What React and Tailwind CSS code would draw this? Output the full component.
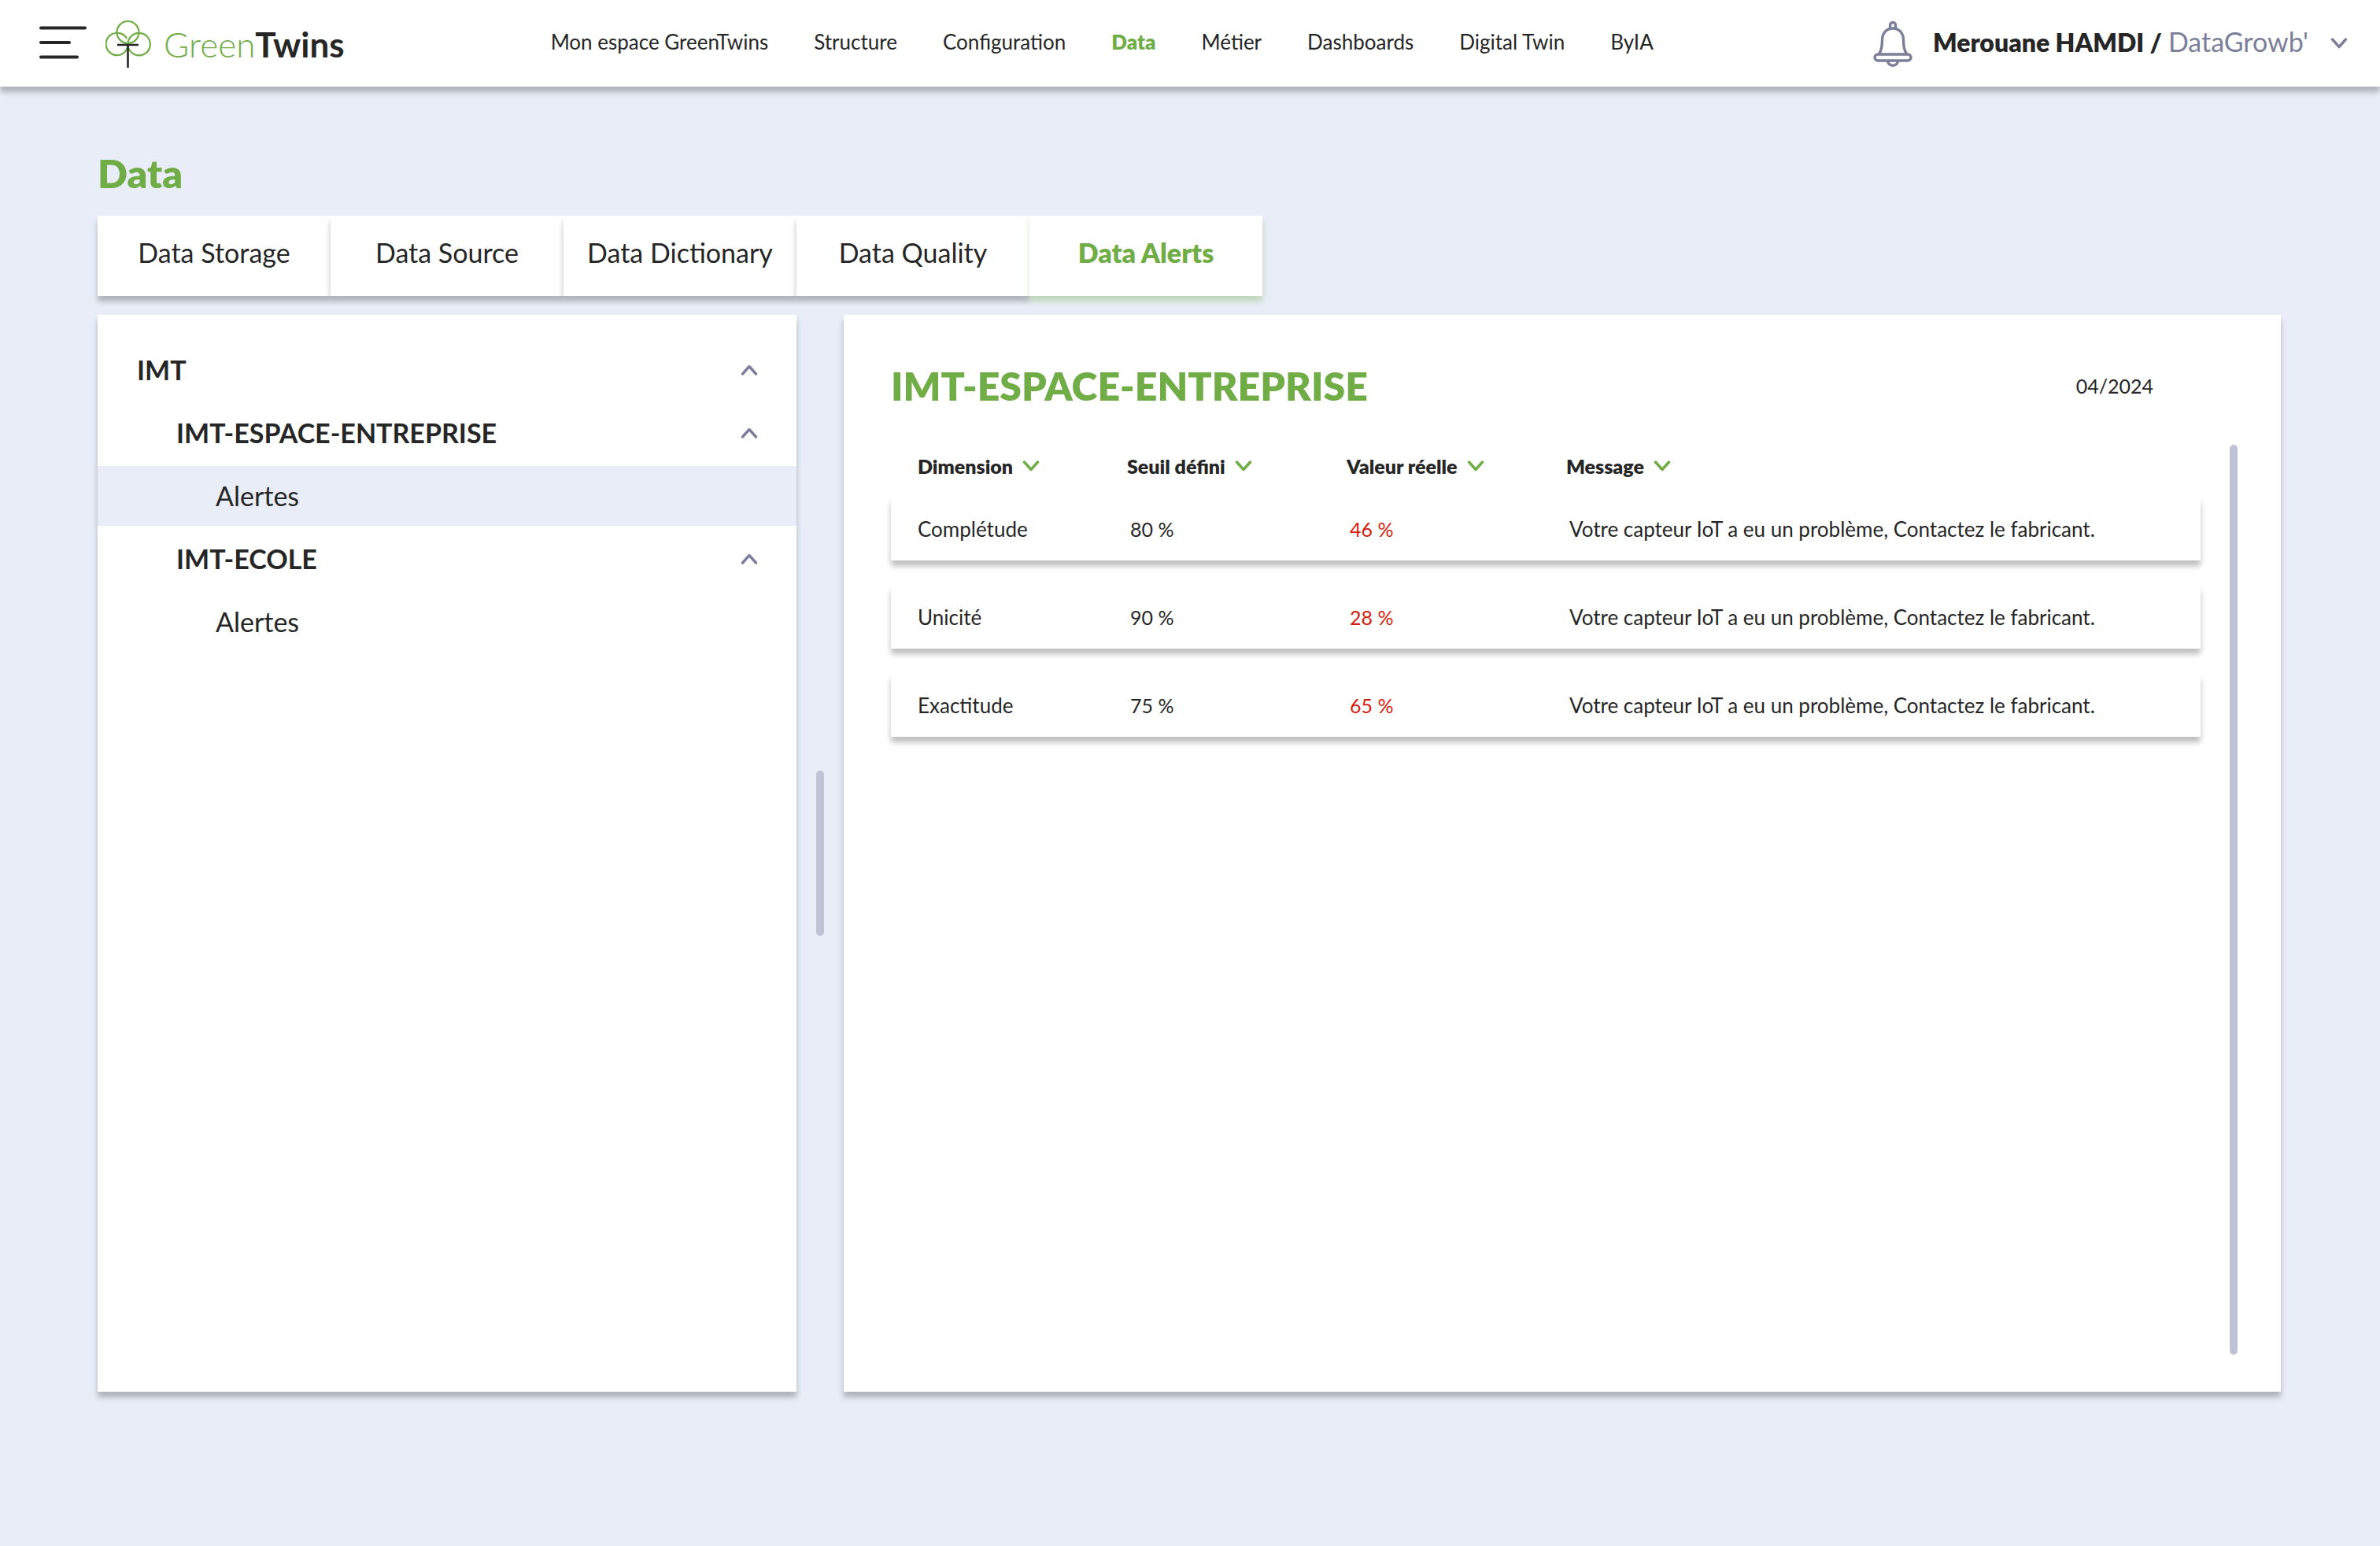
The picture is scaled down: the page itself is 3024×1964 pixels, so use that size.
const NAV = [
  'Mon espace GreenTwins',
  'Structure',
  'Configuration',
  'Data',
  'Métier',
  'Dashboards',
  'Digital Twin',
  'ByIA',
];

const TABS = ['Data Storage', 'Data Source', 'Data Dictionary', 'Data Quality', 'Data Alerts'];

const TREE = [
  { label: 'IMT', kind: 'root' },
  { label: 'IMT-ESPACE-ENTREPRISE', kind: 'group' },
  { label: 'Alertes', kind: 'leaf', selected: true },
  { label: 'IMT-ECOLE', kind: 'group' },
  { label: 'Alertes', kind: 'leaf' },
];

const TREE_STYLE = {
  root: 'pl-[50px] font-bold',
  group: 'pl-[100px] font-bold',
  leaf: 'pl-[150px]',
};

const COLUMNS = ['Dimension', 'Seuil défini', 'Valeur réelle', 'Message'];

const MESSAGE = 'Votre capteur IoT a eu un problème, Contactez le fabricant.';

const ROWS = [
  { dimension: 'Complétude', threshold: '80 %', value: '46 %', message: MESSAGE },
  { dimension: 'Unicité', threshold: '90 %', value: '28 %', message: MESSAGE },
  { dimension: 'Exactitude', threshold: '75 %', value: '65 %', message: MESSAGE },
];

const ROW_GRID = 'grid grid-cols-[266fr_279fr_279fr_806fr] items-center pl-[34px] text-left';

function Chevron({ up = false, className = '' }) {
  return (
    <svg
      aria-hidden="true"
      viewBox="0 0 22 14"
      className={`h-[14px] w-[22px] shrink-0 ${className}`}
      fill="none"
      stroke="currentColor"
      strokeWidth="3.400"
      strokeLinecap="round"
      strokeLinejoin="round"
    >
      <path d={up ? 'M2.500 12 11 2.500l8.500 9.500' : 'M2.500 2l8.500 9.500L19.500 2'} />
    </svg>
  );
}

function MenuIcon() {
  return (
    <svg
      aria-hidden="true"
      viewBox="0 0 60 42"
      className="h-[42px] w-[60px]"
      stroke="#262626"
      strokeWidth="4"
      strokeLinecap="round"
    >
      <path d="M2 2.5h56M2 21h36M2 39.500h46" />
    </svg>
  );
}

function TreeLogo() {
  return (
    <svg aria-hidden="true" viewBox="0 0 58 60" className="h-[60px] w-[58px]" fill="none">
      <g stroke="#70ad47" strokeWidth="2.200">
        <circle cx="28.500" cy="15" r="14" />
        <path d="M27.200 23A14.200 14.200 0 1 0 20 43.200A14.200 14.200 0 0 0 28.500 30" />
        <path d="M37 43.200A14.200 14.200 0 1 0 28.500 30A14.200 14.200 0 0 0 37 43.200" />
      </g>
      <path d="M15 31h27M28.500 31v29" stroke="#262626" strokeWidth="2.600" />
    </svg>
  );
}

function BellIcon() {
  return (
    <svg
      aria-hidden="true"
      viewBox="0 0 50 58"
      className="h-[58px] w-[50px]"
      fill="none"
      stroke="#7b7f99"
      strokeWidth="3.400"
      strokeLinejoin="round"
    >
      <path d="M21.500 9.500V5a3.500 3.500 0 0 1 7 0v4.500" />
      <path d="M7.500 41.500C10.500 37 11.500 32 11.500 24c0-9 5.500-15 13.500-15s13.500 6 13.500 15c0 8 1 13 4 17.500" />
      <rect x="2" y="42" width="46" height="8" rx="4" />
      <path d="M18.500 50.500a6.500 5.800 0 0 0 13 0" />
    </svg>
  );
}

function Header() {
  return (
    <header className="flex h-[110px] items-center bg-white pr-[41px] pl-[50px] shadow-[0_7px_7px_rgba(0,0,0,0.25)]">
      <button type="button" aria-label="Menu" className="pb-0.5">
        <MenuIcon />
      </button>
      <a href="#accueil" className="ml-6 flex items-center pt-0.5">
        <TreeLogo />
        <span className="ml-4 text-[44px] leading-[56px] font-light text-[#70ad47]">
          Green<span className="font-bold text-[#262626]">Twins</span>
        </span>
      </a>
      <nav aria-label="Navigation principale" className="ml-[262px] flex gap-[58px] pb-1 text-[26px] leading-8">
        {NAV.map((item) => (
          <a
            key={item}
            href="#nav"
            aria-current={item === 'Data' ? 'page' : undefined}
            className={item === 'Data' ? 'font-extrabold text-[#70ad47]' : ''}
          >
            {item}
          </a>
        ))}
      </nav>
      <button type="button" aria-label="Notifications" className="ml-auto pt-0.5">
        <BellIcon />
      </button>
      <button type="button" className="ml-[26px] flex items-center text-[34px] leading-10 text-[#7b7f99]">
        <span className="pb-1">
          <span className="mr-2 text-[32px] font-extrabold text-[#262626]">Merouane HAMDI /</span>
          DataGrowb'
        </span>
        <Chevron className="ml-7" />
      </button>
    </header>
  );
}

function Tabs() {
  return (
    <div role="tablist" className="flex text-[34px] leading-10">
      {TABS.map((tab) => {
        const active = tab === 'Data Alerts';
        return (
          <button
            key={tab}
            type="button"
            role="tab"
            aria-selected={active}
            className={`h-[102px] w-[296px] bg-white pb-2 ${
              active
                ? 'font-extrabold text-[#70ad47] shadow-[0_7px_7px_rgba(112,173,71,0.33)]'
                : 'shadow-[0_7px_7px_rgba(0,0,0,0.25)]'
            }`}
          >
            {tab}
          </button>
        );
      })}
    </div>
  );
}

function Tree() {
  return (
    <aside className="bg-white pt-8 shadow-[0_7px_7px_rgba(0,0,0,0.25)]">
      <ul className="flex flex-col gap-1 text-[34px] leading-10">
        {TREE.map((node, i) => (
          <li key={i}>
            <button
              type="button"
              aria-expanded={node.kind === 'leaf' ? undefined : true}
              className={`flex h-[76px] w-full items-center justify-between pr-[49px] text-left ${TREE_STYLE[node.kind]} ${
                node.selected ? 'bg-[#e9edf7]' : ''
              }`}
            >
              {node.label}
              {node.kind !== 'leaf' && <Chevron up className="text-[#7b7f99]" />}
            </button>
          </li>
        ))}
      </ul>
    </aside>
  );
}

function AlertTable() {
  return (
    <table className="mt-14 block text-[26px] leading-8">
      <thead className="block text-[25px]">
        <tr className={ROW_GRID}>
          {COLUMNS.map((column) => (
            <th key={column} scope="col" className="font-extrabold">
              <button type="button" className="flex items-center gap-3">
                {column}
                <Chevron className="text-[#70ad47]" />
              </button>
            </th>
          ))}
        </tr>
      </thead>
      <tbody className="mt-6 flex flex-col gap-8">
        {ROWS.map((row) => (
          <tr key={row.dimension} className={`h-20 bg-white shadow-[0_7px_7px_rgba(0,0,0,0.25)] ${ROW_GRID}`}>
            <td>{row.dimension}</td>
            <td className="pl-1 text-[25px]">{row.threshold}</td>
            <td className="pl-1 text-[25px] text-[#d21f0d]">{row.value}</td>
            <td className="pl-1">{row.message}</td>
          </tr>
        ))}
      </tbody>
    </table>
  );
}

function AlertPanel() {
  return (
    <section className="flex bg-white pt-[60px] pr-[55px] pb-[47px] pl-[60px] shadow-[0_7px_7px_rgba(0,0,0,0.25)]">
      <div className="flex-1">
        <div className="flex items-center justify-between pr-[60px]">
          <h2 className="text-[50px] leading-[60px] font-extrabold text-[#70ad47]">IMT-ESPACE-ENTREPRISE</h2>
          <span className="text-[25px] leading-8">04/2024</span>
        </div>
        <AlertTable />
      </div>
      <div className="mt-[105px] ml-[37px] w-[10px] rounded-full bg-[#bfc1d6]" />
    </section>
  );
}

export default function App() {
  return (
    <div className="flex min-h-screen flex-col bg-[#e9edf7] font-['Lato',sans-serif] text-[#262626]">
      <Header />
      <main className="flex flex-1 flex-col pt-20 pr-[126px] pb-[196px] pl-[124px]">
        <h1 className="text-[50px] leading-[60px] font-extrabold text-[#70ad47]">Data</h1>
        <div className="mt-6">
          <Tabs />
        </div>
        <div className="mt-6 grid flex-1 grid-cols-[888fr_60px_1826fr]">
          <Tree />
          <div className="flex justify-center pt-[579px]">
            <div className="h-[210px] w-[10px] rounded-full bg-[#bfc1d6]" />
          </div>
          <AlertPanel />
        </div>
      </main>
    </div>
  );
}
